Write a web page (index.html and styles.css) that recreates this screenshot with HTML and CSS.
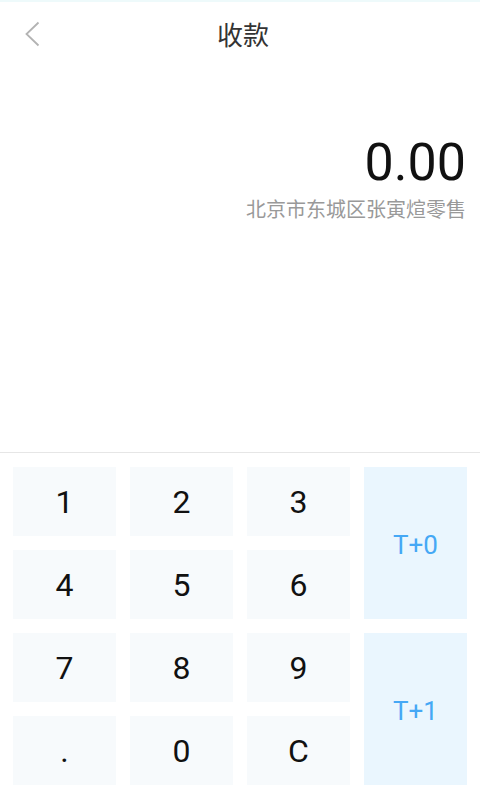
FILE: index.html
```html
<!DOCTYPE html>
<html lang="zh-CN">
<head>
<meta charset="utf-8">
<title>收款</title>
<link rel="stylesheet" href="styles.css">
</head>
<body>
<div class="page">
  <header class="header">
    <span class="back">
      <svg width="20" height="30" viewBox="0 0 20 30"><polyline points="13.5,3.5 1.5,15 13.5,26.5" fill="none" stroke="#b3b3b3" stroke-width="1.8"/></svg>
    </span>
    <h1 class="title">收款</h1>
  </header>
  <section class="amount-area">
    <div class="amount">0.00</div>
    <div class="shop">北京市东城区张寅煊零售</div>
  </section>
  <section class="keypad">
    <div class="key">1</div>
    <div class="key">2</div>
    <div class="key">3</div>
    <div class="key key-t">T+0</div>
    <div class="key">4</div>
    <div class="key">5</div>
    <div class="key">6</div>
    <div class="key">7</div>
    <div class="key">8</div>
    <div class="key">9</div>
    <div class="key key-t">T+1</div>
    <div class="key">.</div>
    <div class="key">0</div>
    <div class="key">C</div>
  </section>
</div>
</body>
</html>
```
FILE: styles.css
```css
html, body {
  margin: 0;
  padding: 0;
  background: #ffffff;
}
body {
  font-family: Roboto, "Noto Sans CJK SC", sans-serif;
}
.page {
  width: 480px;
  height: 800px;
  display: flex;
  flex-direction: column;
  border-top: 2px solid #eefafb;
  box-sizing: border-box;
}
.header {
  position: relative;
  height: 64px;
  display: flex;
  align-items: center;
  justify-content: center;
  padding-left: 6px;
}
.back {
  position: absolute;
  left: 25px;
  top: 17px;
  width: 20px;
  height: 30px;
}
.back svg {
  display: block;
}
.title {
  margin: 0;
  font-size: 26px;
  font-weight: 400;
  color: #333333;
  font-family: "Noto Sans CJK SC", sans-serif;
  line-height: 64px;
}
.amount-area {
  flex: 1;
  padding: 66px 14px 0 0;
  text-align: right;
}
.amount {
  font-size: 52px;
  line-height: 62px;
  color: #111111;
}
.shop {
  margin-top: 1px;
  font-size: 20px;
  line-height: 28px;
  color: #999999;
  font-family: "Noto Sans CJK SC", sans-serif;
}
.keypad {
  border-top: 1px solid #e6e6e6;
  padding: 14px 13px 15px 13px;
  display: grid;
  grid-template-columns: repeat(4, 103px);
  grid-auto-rows: 69px;
  gap: 14px;
}
.key {
  background: #f7fafc;
  display: flex;
  align-items: center;
  justify-content: center;
  font-size: 32px;
  color: #111111;
}
.key-t {
  grid-column: 4;
  grid-row: span 2;
  background: #eaf6fe;
  color: #45a8f5;
  font-size: 26px;
  padding-top: 4px;
  box-sizing: border-box;
}
```
